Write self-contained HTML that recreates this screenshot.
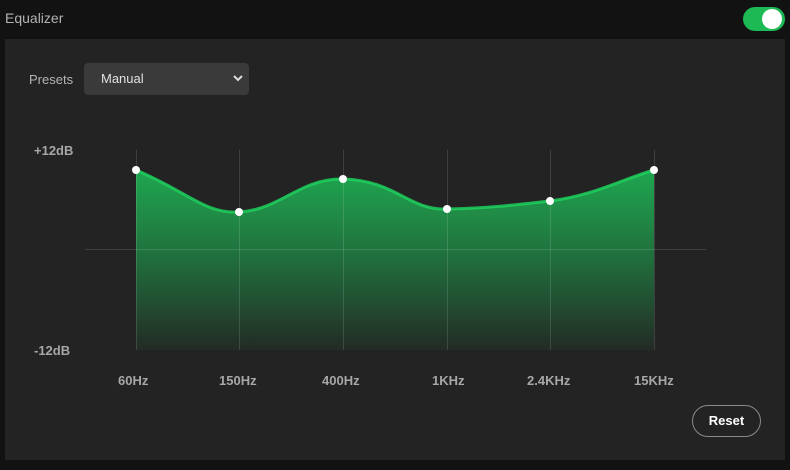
<!DOCTYPE html>
<html><head><style>
body{margin:0;width:790px;height:470px;background:#121212;font-family:"Liberation Sans",sans-serif;overflow:hidden;position:relative}
.t{position:absolute;left:5px;top:10px;color:#b3b3b3;font-size:14px}
.tog{position:absolute;left:743px;top:7px;width:42px;height:24px;border-radius:12px;background:#1db954}
.tog:after{content:"";position:absolute;right:3px;top:2px;width:20px;height:20px;border-radius:50%;background:#fff}
.panel{position:absolute;left:5px;top:39px;width:780px;height:421px;background:#232323}
.pl{position:absolute;left:29px;top:72px;color:#b3b3b3;font-size:13px}
.sel{position:absolute;left:84px;top:63px;width:165px;height:32px;border-radius:4px;background:#3a3a3a;color:#e0e0e0;font-size:13px;box-sizing:border-box;padding:8px 0 0 17px}
.sel svg{position:absolute;right:6px;top:12px}
.lab{position:absolute;color:#a7a7a7;font-size:13px;font-weight:bold}
.reset{position:absolute;left:692px;top:405px;width:67px;height:30px;border:1px solid #8a8a8a;border-radius:16px;color:#fff;font-size:13px;font-weight:bold;text-align:center;line-height:30px}
</style></head><body>
<div class="t">Equalizer</div>
<div class="tog"></div>
<div class="panel"></div>
<div class="pl">Presets</div>
<div class="sel">Manual<svg width="10" height="7" viewBox="0 0 10 7"><path d="M1 1 L5 5 L9 1" stroke="#ddd" stroke-width="2" fill="none"/></svg></div>
<svg style="position:absolute;left:0;top:0" width="790" height="470">
<defs><linearGradient id="g" x1="0" y1="170" x2="0" y2="350" gradientUnits="userSpaceOnUse">
<stop offset="0" stop-color="#1fa650"/><stop offset="1" stop-color="#1db954" stop-opacity="0.05"/></linearGradient></defs>
<path d="M136 170 C188 192,205 214,239 212 C280 210,300 178,343 179 C395 180,410 211,447 209 C490 208,515 205,550 201 C595 195,620 180,654 170 L654 350 L136 350 Z" fill="url(#g)"/>
<g stroke="#ffffff" stroke-opacity="0.13" stroke-width="1">
<line x1="136.5" y1="150" x2="136.5" y2="350"/><line x1="239.5" y1="150" x2="239.5" y2="350"/><line x1="343.5" y1="150" x2="343.5" y2="350"/><line x1="447.5" y1="150" x2="447.5" y2="350"/><line x1="550.5" y1="150" x2="550.5" y2="350"/><line x1="654.5" y1="150" x2="654.5" y2="350"/>
<line x1="85" y1="249.5" x2="706" y2="249.5"/></g>
<path d="M136 170 C188 192,205 214,239 212 C280 210,300 178,343 179 C395 180,410 211,447 209 C490 208,515 205,550 201 C595 195,620 180,654 170" fill="none" stroke="#1ed760" stroke-opacity="0.8" stroke-width="3"/>
<g fill="#fff"><circle cx="136" cy="170" r="4"/><circle cx="239" cy="212" r="4"/><circle cx="343" cy="179" r="4"/><circle cx="447" cy="209" r="4"/><circle cx="550" cy="201" r="4"/><circle cx="654" cy="170" r="4"/></g>
</svg>
<div class="lab" style="left:34px;top:143px">+12dB</div>
<div class="lab" style="left:34px;top:343px">-12dB</div>
<div class="lab" style="left:118px;top:373px">60Hz</div>
<div class="lab" style="left:219px;top:373px">150Hz</div>
<div class="lab" style="left:322px;top:373px">400Hz</div>
<div class="lab" style="left:432px;top:373px">1KHz</div>
<div class="lab" style="left:527px;top:373px">2.4KHz</div>
<div class="lab" style="left:634px;top:373px">15KHz</div>
<div class="reset">Reset</div>
</body></html>
